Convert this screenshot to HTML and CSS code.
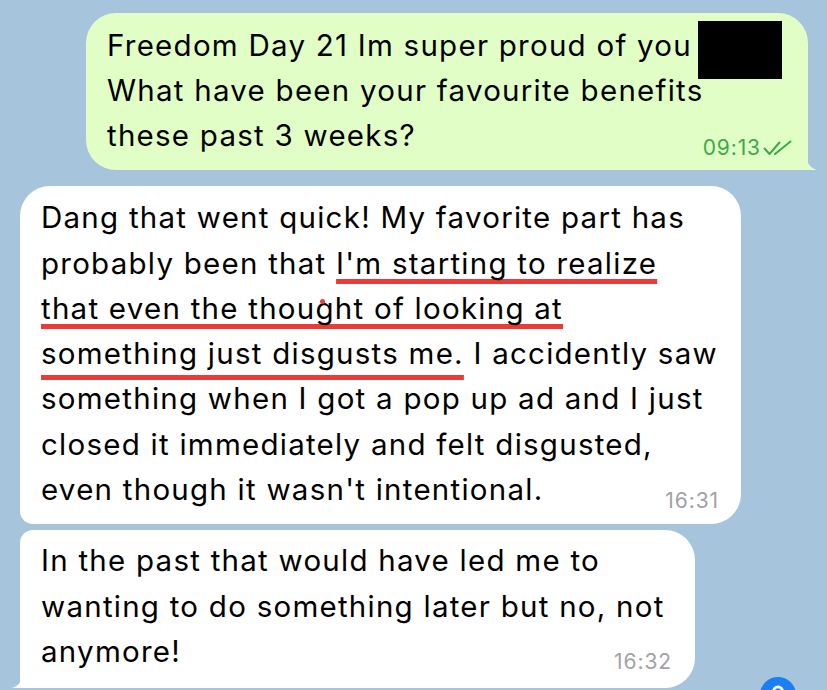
FILE: index.html
```html
<!DOCTYPE html>
<html>
<head>
<meta charset="utf-8">
<link rel="stylesheet" href="styles.css">
</head>
<body>
<div class="chat">
  <div class="bubble out">
    <div class="text">Freedom Day 21 Im super proud of you<br>What have been your favourite benefits<br>these past 3 weeks?</div>
    <span class="redact"></span>
    <span class="meta meta-out">09:13<svg class="checks" viewBox="0 0 30 16" width="30" height="16"><path d="M1.5 8.5 L6.5 14 L16.5 2.5" /><path d="M12 14 L27.5 1.5" /></svg></span>
    <svg class="tail tail-r" viewBox="0 0 30 30" width="30" height="30"><path d="M19 0 L19 14 C19 22 23 28 30 30 L0 30 Z"/></svg>
  </div>

  <div class="bubble in first">
    <div class="text">Dang that went quick! My favorite part has<br>probably been that <span class="u u1">I'm starting to realize</span><br><span class="u u2">that even the thought of looking at</span><br><span class="u u3">something just disgusts me.</span> I accidently saw<br>something when I got a pop up ad and I just<br>closed it immediately and felt disgusted,<br>even though it wasn't intentional.</div>
    <span class="dot"></span>
    <span class="meta meta-in1">16:31</span>
  </div>

  <div class="bubble in last">
    <div class="text">In the past that would have led me to<br>wanting to do something later but no, not<br>anymore!</div>
    <span class="meta meta-in2">16:32</span>
    <svg class="tail tail-l" viewBox="0 0 30 30" width="30" height="30"><path d="M11 0 L11 14 C11 22 7 28 0 30 L30 30 Z"/></svg>
  </div>
</div>
<div class="fab"><svg viewBox="0 0 36 36" width="36" height="36"><circle cx="18" cy="14.5" r="4.6" fill="none" stroke="#fff" stroke-width="2.6"/></svg></div>
</body>
</html>
```

FILE: styles.css
```css
html, body {
  margin: 0;
  padding: 0;
}
body {
  width: 827px;
  height: 690px;
  overflow: hidden;
  background: #a6c4dc;
  font-family: Inter, "Liberation Sans", sans-serif;
  color: #000;
  position: relative;
}
.chat {
  display: flex;
  flex-direction: column;
  align-items: flex-start;
  padding: 13px 0 0 20px;
}
.bubble {
  position: relative;
  box-sizing: border-box;
  font-size: 29.5px;
  white-space: nowrap;
}
.bubble.out {
  align-self: flex-end;
  margin-right: 19px;
  width: 722px;
  background: #e1fec6;
  border-radius: 30px 30px 4px 30px;
  padding: 9.5px 20px 12.5px 21px;
  line-height: 45px;
}
.bubble.in {
  background: #fff;
}
.bubble.first {
  margin-top: 16px;
  width: 721px;
  border-radius: 30px 30px 30px 13px;
  padding: 9.3px 20px 11.6px 21px;
  line-height: 45.3px;
}
.bubble.last {
  margin-top: 6px;
  width: 675px;
  border-radius: 13px 30px 30px 4px;
  padding: 8.25px 20px 13.25px 21px;
  line-height: 45.5px;
}
.text {
  letter-spacing: 1.25px;
}
.redact {
  position: absolute;
  left: 612px;
  top: 8px;
  width: 84px;
  height: 58px;
  background: #000;
}
.meta {
  position: absolute;
  font-size: 21px;
  line-height: 21px;
  letter-spacing: 0.9px;
  display: flex;
  align-items: center;
  gap: 2px;
}
.meta-out {
  right: 15px;
  bottom: 12px;
  color: #3da94a;
}
.meta-in1 {
  right: 22px;
  bottom: 13px;
  color: #a1a1a6;
}
.meta-in2 {
  right: 23px;
  bottom: 16px;
  color: #a1a1a6;
}
.checks path {
  fill: none;
  stroke: #3da94a;
  stroke-width: 2;
  stroke-linecap: round;
  stroke-linejoin: round;
}
.tail {
  position: absolute;
  bottom: 0;
}
.tail-r {
  right: -9px;
}
.tail-r path {
  fill: #e1fec6;
}
.tail-l {
  left: -8px;
}
.tail-l path {
  fill: #fff;
}
.u {
  text-decoration-line: underline;
  text-decoration-color: #ec3b36;
  text-decoration-thickness: 5px;
  text-decoration-skip-ink: none;
}
.u1 { text-underline-offset: 5px; }
.u2 { text-underline-offset: 5px; }
.u3 { text-underline-offset: 11px; }
.dot {
  position: absolute;
  left: 300px;
  top: 113px;
  width: 5px;
  height: 5px;
  border-radius: 50%;
  background: #ec3b36;
}
.fab {
  position: absolute;
  left: 760px;
  top: 677px;
  width: 36px;
  height: 36px;
  border-radius: 50%;
  background: #1a7ff2;
}
.fab svg {
  display: block;
}
```
